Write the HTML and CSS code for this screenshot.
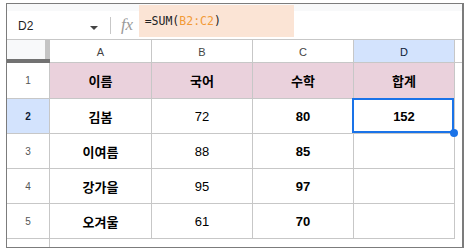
FILE: index.html
```html
<!DOCTYPE html>
<html lang="ko">
<head>
<meta charset="utf-8">
<link rel="stylesheet" href="styles.css">
</head>
<body>
<div class="frame">
  <div class="fbar">
    <div class="namebox">D2</div>
    <div class="caret"></div>
    <div class="sep"></div>
    <div class="fx">fx</div>
    <div class="formula">=SUM(<span class="ref">B2:C2</span>)</div>
  </div>
  <div class="grid">
    <div class="corner"></div>
    <div class="ch">A</div>
    <div class="ch">B</div>
    <div class="ch">C</div>
    <div class="ch sel">D</div>
    <div class="ch end"></div>

    <div class="rh">1</div>
    <div class="c head">이름</div>
    <div class="c head">국어</div>
    <div class="c head">수학</div>
    <div class="c head">합계</div>
    <div class="x"></div>

    <div class="rh sel">2</div>
    <div class="c b">김봄</div>
    <div class="c">72</div>
    <div class="c b">80</div>
    <div class="c b active">152<span class="ring"></span><span class="dot"></span></div>
    <div class="x"></div>

    <div class="rh">3</div>
    <div class="c b">이여름</div>
    <div class="c">88</div>
    <div class="c b">85</div>
    <div class="c"></div>
    <div class="x"></div>

    <div class="rh">4</div>
    <div class="c b">강가을</div>
    <div class="c">95</div>
    <div class="c b">97</div>
    <div class="c"></div>
    <div class="x"></div>

    <div class="rh">5</div>
    <div class="c b">오겨울</div>
    <div class="c">61</div>
    <div class="c b">70</div>
    <div class="c"></div>
    <div class="x"></div>

    <div class="rh last"></div>
    <div class="rest"></div>
  </div>
</div>
</body>
</html>
```
FILE: styles.css
```css
* { box-sizing: border-box; }
html, body { margin: 0; padding: 0; background: #fff; }
body { font-family: "Liberation Sans", Arial, "Noto Sans CJK KR", sans-serif; }

.frame {
  margin: 3px 0 0 6px;
  width: 458px;
  height: 245px;
  border: solid #7c7c7c;
  border-width: 1px 2px 1px 1px;
  display: flex;
  flex-direction: column;
  overflow: hidden;
}

.fbar {
  height: 36px;
  flex: none;
  display: flex;
  align-items: flex-start;
  background: linear-gradient(#f8f9fa 0 7px, #fff 7px);
  border-bottom: 1px solid #c7c7c7;
}
.namebox {
  margin: 15px 0 0 11px;
  width: 66px;
  font-size: 12px;
  line-height: 14px;
  color: #1f1f1f;
}
.caret {
  margin: 22px 0 0 6px;
  width: 0;
  height: 0;
  border-left: 4px solid transparent;
  border-right: 4px solid transparent;
  border-top: 4px solid #444;
}
.sep {
  margin: 13px 0 0 12px;
  width: 1px;
  height: 17px;
  background: #c7c7c7;
}
.fx {
  margin: 12px 0 0 10px;
  font-family: "Liberation Serif", "Times New Roman", serif;
  font-style: italic;
  font-size: 17px;
  line-height: 18px;
  color: #9a9a9a;
  letter-spacing: -0.3px;
}
.formula {
  margin: 1px 0 0 6px;
  width: 155px;
  height: 32px;
  background: #fbe4d5;
  padding: 9px 0 0 6px;
  font-family: "DejaVu Sans Mono", "Liberation Mono", monospace;
  font-size: 11.5px;
  line-height: 14px;
  color: #202124;
}
.ref { color: #f29a36; }

.grid {
  flex: 1;
  display: grid;
  grid-template-columns: 43px 102px 101px 101px 101px 1fr;
  grid-template-rows: 23px 36px 35px 35px 35px 35px 1fr;
}
.corner {
  background: #f8f9fa;
  box-shadow: inset 0 -4px 0 #727272, inset -5px 0 0 #c4c4c4;
}
.ch {
  border-right: 1px solid #c7c7c7;
  border-bottom: 1px solid #c7c7c7;
  display: flex;
  align-items: center;
  justify-content: center;
  font-size: 11px;
  color: #444;
  padding-top: 1px;
}
.ch.end { border-right: none; }
.ch.sel { background: #d3e3fd; color: #0b1a33; }
.rh {
  border-right: 1px solid #c7c7c7;
  border-bottom: 1px solid #c7c7c7;
  display: flex;
  align-items: center;
  justify-content: center;
  font-size: 10px;
  color: #555;
}
.rh.sel { background: #d3e3fd; color: #0b1a33; font-weight: bold; }
.rh.last { border-bottom: none; }
.rest { grid-column: 2 / 7; }
.c {
  border-right: 1px solid #c7c7c7;
  border-bottom: 1px solid #c7c7c7;
  display: flex;
  align-items: center;
  justify-content: center;
  font-family: "Liberation Sans", Arial, "Noto Sans CJK KR", sans-serif;
  font-size: 13px;
  color: #000;
}
.c.b, .c.head { font-weight: bold; }
.c.head { background: #ead1dc; }
.active { position: relative; }
.ring {
  position: absolute;
  left: -2px;
  top: -1px;
  right: 0;
  bottom: 0;
  border: 2px solid #1a73e8;
}
.dot {
  position: absolute;
  right: -4px;
  bottom: -4px;
  width: 8px;
  height: 8px;
  border-radius: 50%;
  background: #1a73e8;
}
```
